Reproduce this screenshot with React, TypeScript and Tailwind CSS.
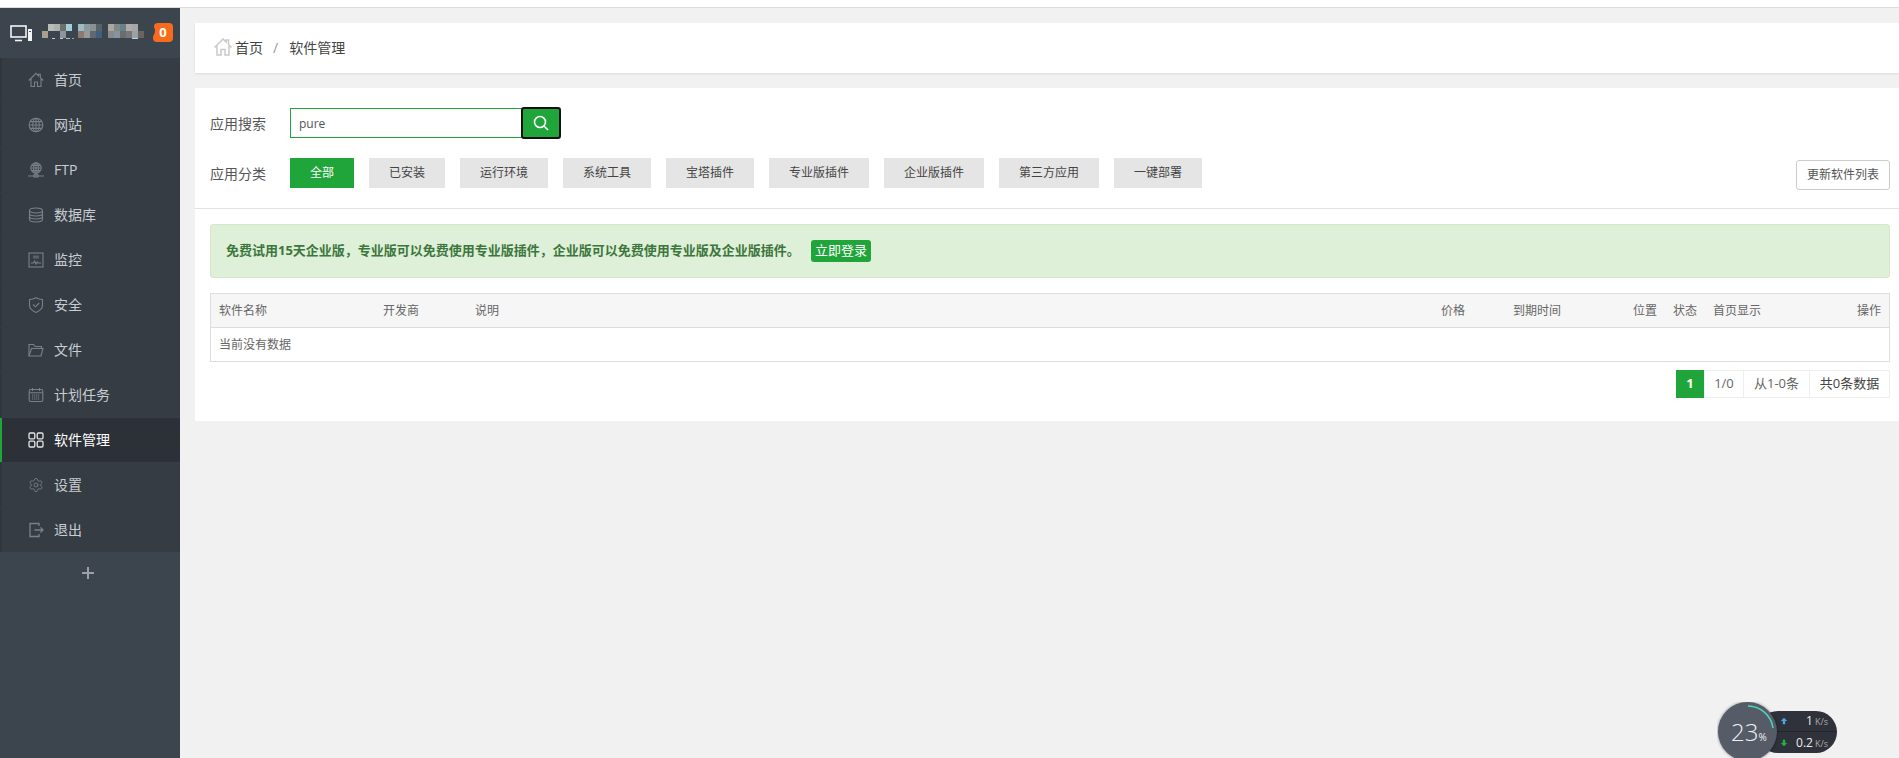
import React from "react";
import { Settings } from "lucide-react";

const FONT = '"Open Sans", "Liberation Sans", "Noto Sans CJK SC", sans-serif';

const S = { fill: "none", stroke: "#7b8088", strokeWidth: 1.1 };

const icons: Record<string, React.ReactNode> = {
  home: <path {...S} d="M.8 8.500 8 1.300l2.500 2.500V2.300h1.800v3.300l2.900 2.900M3 7v7.500h3.500V10h3v4.500H13V7" />,
  site: <g {...S}><circle cx="8" cy="8" r="6.800" /><ellipse cx="8" cy="8" rx="3.200" ry="6.800" /><path d="M1.200 8h13.600M2 4.600h12M2 11.400h12M8 1.200v13.600" /></g>,
  ftp: <g {...S}><circle cx="8" cy="6" r="5.200" /><ellipse cx="8" cy="6" rx="2.400" ry="5.200" /><path d="M2.800 6h10.400M3.600 3.400h8.800M3.600 8.600h8.800M8 .8v10.400M8 11.200v1.800M0 14h16" /><rect x="6" y="12.800" width="4" height="2.200" /></g>,
  db: <g {...S}><ellipse cx="8" cy="3.500" rx="6.500" ry="2.500" /><path d="M1.500 3.500v9c0 1.400 2.900 2.500 6.500 2.500s6.500-1.100 6.500-2.500v-9M1.500 6.500c0 1.400 2.900 2.500 6.500 2.500s6.500-1.100 6.500-2.500M1.500 9.500c0 1.400 2.900 2.500 6.500 2.500s6.500-1.100 6.500-2.500" /></g>,
  monitor: <g {...S}><rect x="1" y="1" width="14" height="14" /><path d="M3 11h2.500l1.200-2 1.300 3 1.300-2 .7 1H13" /><rect x="5" y="3.500" width="6" height="3" fill="#5c626a" stroke="none" /></g>,
  shield: <g {...S}><path d="M8 .8c2 1.200 4 1.700 6.500 1.700v6c0 3.200-2.800 5.300-6.500 6.900-3.700-1.600-6.500-3.700-6.500-6.900v-6C4 2.500 6 2 8 .8Z" /><path d="m5 7.500 2.300 2.300L11.200 6" /></g>,
  folder: <g {...S}><path d="M1 14V2.500h4.500L7 4.500h6.500V6.500" /><path d="M1 14 3.500 6.500H15L13 14Z" /></g>,
  calendar: <g {...S}><rect x="1.200" y="2.500" width="13.600" height="12" rx="1.500" /><path d="M1.200 5.800h13.600M4.500 1v3M11.500 1v3" /><path d="M4 8h8M4 10h8M4 12h8" strokeDasharray="1.200 .8" /></g>,
  soft: <g fill="none" stroke="#e4e6e8" strokeWidth="1.300"><rect x="1" y="1" width="5.800" height="5.800" rx="1.200" /><rect x="9.200" y="1" width="5.800" height="5.800" rx="1.200" /><rect x="1" y="9.200" width="5.800" height="5.800" rx="1.200" /><rect x="9.200" y="9.200" width="5.800" height="5.800" rx="1.200" /></g>,
  exit: <g {...S} strokeWidth="1.300"><path d="M11 4V1.500H2v13h9V12" /><path d="M6.500 8H15M12.500 5.500 15 8l-2.500 2.500" /></g>,
};

const menu: [string, string][] = [
  ["home", "首页"], ["site", "网站"], ["ftp", "FTP"], ["db", "数据库"], ["monitor", "监控"], ["shield", "安全"],
  ["folder", "文件"], ["calendar", "计划任务"], ["soft", "软件管理"], ["gear", "设置"], ["exit", "退出"],
];

const mosaic: [number, number, number, number, string][] = [
  [48, 16, 6, 7, "#b9bdb7"], [54, 16, 6, 7, "#aeb2ac"], [60, 16, 6, 7, "#6b6f6e"], [66, 16, 6, 7, "#a5cdd8"],
  [78, 16, 6, 7, "#9dbcc1"], [84, 16, 6, 7, "#8c9a9f"], [90, 16, 6, 7, "#8a8f93"], [96, 16, 6, 7, "#596168"],
  [108, 16, 6, 7, "#a9a79f"], [114, 16, 6, 7, "#7f8a85"], [120, 16, 6, 7, "#66808c"], [126, 16, 6, 7, "#b3a9a7"], [132, 16, 6, 7, "#a4a6a8"],
  [42, 23, 6, 7, "#a9a08b"], [60, 23, 6, 7, "#8e949d"], [78, 23, 6, 7, "#8c7a72"], [84, 23, 6, 7, "#96999a"], [90, 23, 6, 7, "#62686d"], [96, 23, 6, 7, "#3f5f7c"],
  [108, 23, 6, 7, "#868a8f"], [114, 23, 6, 7, "#8693a3"], [120, 23, 6, 7, "#6c6c6c"], [126, 23, 6, 7, "#77777d"], [132, 23, 6, 7, "#9ba1a8"], [138, 23, 6, 7, "#6a655c"],
  [52, 30, 3, 1, "#c8cccf"], [60, 30, 3, 1, "#c8cccf"], [66, 30, 4, 1, "#b6bcc0"], [72, 30, 2, 1, "#9aa0a5"], [132, 30, 6, 1, "#c8cccf"],
];

const tabs: [string, string][] = [
  ["全部", "w-[64px]"], ["已安装", "w-[76px]"], ["运行环境", "w-[88px]"], ["系统工具", "w-[88px]"], ["宝塔插件", "w-[88px]"],
  ["专业版插件", "w-[100px]"], ["企业版插件", "w-[100px]"], ["第三方应用", "w-[100px]"], ["一键部署", "w-[88px]"],
];

const cols: [string, string][] = [
  ["软件名称", "w-[164px]"], ["开发商", "w-[92px]"], ["说明", "w-[966px]"], ["价格", "w-[72px]"], ["到期时间", "w-[120px]"],
  ["位置", "w-[40px]"], ["状态", "w-[40px]"], ["首页显示", "w-[60px]"],
];

export default function App() {
  return (
    <div className="flex h-[758px] w-full flex-col overflow-hidden bg-[#f1f1f1] text-[12px] text-[#555]" style={{ fontFamily: FONT }}>
      <div className="h-[8px] shrink-0 border-b border-[#dcdcdc] bg-white" />
      <div className="relative flex min-h-0 flex-1">
        <aside className="flex w-[180px] shrink-0 flex-col bg-[#3c444d]">
          <div className="relative flex h-[50px] items-center">
            <svg width="180" height="50" viewBox="0 0 180 50">
              <g fill="none" stroke="#f3f4f5" strokeWidth="1.600">
                <rect x="11" y="18" width="15" height="11" />
                <path d="M15 32.500h7" />
              </g>
              <rect x="28" y="21" width="4" height="12" fill="#f3f4f5" />
              <rect x="29" y="23" width="2" height="1" fill="#555" />
              {mosaic.map(([x, y, w, h, c], i) => <rect key={i} x={x} y={y} width={w} height={h} fill={c} />)}
              <path d="M158 15h11a4 4 0 0 1 4 4v11a4 4 0 0 1-4 4h-12a4 4 0 0 1-4-4v-1c0-2 2-3 2-6s-1-3-1-5c0-2 2-3 4-3Z" fill="#f96b1c" />
            </svg>
            <span className="absolute left-[158px] top-[15px] flex h-[19px] w-[10px] items-center justify-center text-[13px] font-bold text-white">0</span>
          </div>
          <nav className="h-[494px] overflow-hidden bg-[#363c44]">
            {menu.map(([ic, label]) => {
              const active = ic === "soft";
              return (
                <div key={ic} className="h-[45px]">
                  <div className={`flex h-[44px] items-center border-l-2 pb-[1px] pl-[26px] text-[14px] ${active ? "border-[#20a53a] bg-[#2c3138] text-white" : "border-[#31363d] text-[#c8cdd2]"}`}>
                    {ic === "gear"
                      ? <Settings size={16} strokeWidth={1.300} color="#7b8088" className="mr-[10px] shrink-0" />
                      : <svg width="16" height="16" viewBox="0 0 16 16" className="mr-[10px] shrink-0">{icons[ic]}</svg>}
                    <span>{label}</span>
                  </div>
                </div>
              );
            })}
          </nav>
          <div className="flex h-[42px] items-center justify-center pr-[5px]">
            <svg width="14" height="14" viewBox="0 0 14 14"><path d="M7 1v12M1 7h12" stroke="#9ba1a7" strokeWidth="2" /></svg>
          </div>
        </aside>

        <main className="min-w-0 flex-1 pl-[15px] pt-[15px]">
          <div className="flex h-[50px] items-center bg-white pb-[2px] pl-[18px] text-[14px] shadow-[0_1px_2px_rgba(0,0,0,0.1)]">
            <svg width="20" height="20" viewBox="0 0 20 20" className="mr-[2px]"><path d="M1.500 10.500 10 2l3 3V3h2.500v4.500L18.500 10.500M4 9v9h4v-5.500h4V18h4V9" fill="none" stroke="#c9c9c9" strokeWidth="1.500" /></svg>
            <span className="text-[#444]">首页</span>
            <span className="ml-[10px] mr-[11px] text-[#999]">/</span>
            <span className="text-[#444]">软件管理</span>
          </div>

          <div className="mt-[15px] bg-white">
            <div className="relative h-[121px] border-b border-[#e3e3e3] pl-[15px] pt-[19px]">
              <div className="flex items-center">
                <span className="w-[80px] text-[14px] text-[#555]">应用搜索</span>
                <div className="flex h-[30px] w-[232px] items-center border border-[#20a53a] pl-[8px] pt-[1px] text-[12px] text-[#555]">pure</div>
                <div className="-ml-[1px] flex h-[32px] w-[40px] items-center justify-center rounded-[3px] border-2 border-[#111] bg-[#20a53a]">
                  <svg width="18" height="18" viewBox="0 0 18 18" fill="none" stroke="#fff" strokeWidth="1.600"><circle cx="8" cy="8" r="5.500" /><path d="m12 12 4 4" /></svg>
                </div>
              </div>
              <div className="mt-[19px] flex items-center">
                <span className="w-[80px] text-[14px] text-[#555]">应用分类</span>
                <div className="flex gap-[15px]">
                  {tabs.map(([t, w], i) => (
                    <div key={t} className={`flex h-[30px] items-center justify-center ${w} ${i === 0 ? "bg-[#20a53a] text-white" : "bg-[#e5e5e5] text-[#444]"}`}>{t}</div>
                  ))}
                </div>
              </div>
              <div className="absolute right-[9px] top-[72px] flex h-[30px] w-[94px] items-center justify-center rounded-[3px] border border-[#ccc] bg-white text-[#555]">更新软件列表</div>
            </div>

            <div className="pb-[23px] pl-[15px] pr-[9px] pt-[15px]">
              <div className="flex h-[54px] items-center rounded-[3px] border border-[#d6e9c6] bg-[#dff0d8] pl-[15px] text-[13px] font-bold text-[#3c763d]">
                <span>免费试用15天企业版，专业版可以免费使用专业版插件，企业版可以免费使用专业版及企业版插件。</span>
                <span className="ml-[11px] flex h-[22px] items-center rounded-[3px] bg-[#20a53a] px-[4px] font-normal text-white">立即登录</span>
              </div>

              <div className="mt-[15px] border border-[#ddd]">
                <div className="flex h-[34px] items-center border-b border-[#ddd] bg-[#f6f6f6] pl-[8px] text-[#666]">
                  {cols.map(([c, w]) => <span key={c} className={`shrink-0 ${w}`}>{c}</span>)}
                  <span className="ml-auto pr-[8px]">操作</span>
                </div>
                <div className="flex h-[33px] items-center pl-[8px] text-[#666]">当前没有数据</div>
              </div>

              <div className="mt-[8px] flex justify-end text-[13px]">
                <span className="flex h-[28px] w-[28px] items-center justify-center bg-[#20a53a] font-bold text-white">1</span>
                <span className="flex h-[28px] w-[40px] items-center justify-center border border-[#eee] text-[#666]">1/0</span>
                <span className="-ml-px flex h-[28px] w-[67px] items-center justify-center border border-[#eee] text-[#666]">从1-0条</span>
                <span className="-ml-px flex h-[28px] w-[81px] items-center justify-center border border-[#eee] text-[#444]">共0条数据</span>
              </div>
            </div>
          </div>
        </main>

        <div className="absolute bottom-0 right-[62px] h-[56px] w-[120px] overflow-hidden">
          <div className="absolute left-[40px] top-[9px] h-[42px] w-[80px] rounded-full bg-[#2f323a] text-[#eee]">
            <div className="absolute left-[25px] top-[2px] flex w-[46px] items-baseline justify-end text-[12px] leading-[16px]">1<span className="ml-[2px] text-[9px] text-[#aaa]">K/s</span></div>
            <div className="absolute left-[25px] top-[24px] flex w-[46px] items-baseline justify-end text-[12px] leading-[16px]">0.2<span className="ml-[2px] text-[9px] text-[#aaa]">K/s</span></div>
            <div className="absolute left-0 top-[20px] h-px w-full bg-[#24262c]" />
            <svg width="8" height="8" viewBox="0 0 10 10" className="absolute left-[23px] top-[6px]"><path d="M5 1 9 5H6.500v4h-3V5H1Z" fill="#4aa8e8" /></svg>
            <svg width="8" height="8" viewBox="0 0 10 10" className="absolute left-[23px] top-[28px]"><path d="M5 9 1 5h2.500V1h3v4H9Z" fill="#22b53c" /></svg>
          </div>
          <div className="absolute left-[1px] top-0 h-[59px] w-[59px] rounded-full bg-[#565b68] shadow-[0_0_3px_rgba(0,0,0,0.5)]">
            <svg width="59" height="59" viewBox="0 0 59 59" className="absolute left-0 top-0"><path d="M30 4A25.500 25.500 0 0 1 55 26" fill="none" stroke="#4dd6b8" strokeWidth="1.500" /></svg>
            <div className="absolute left-[13px] top-[16px] flex items-baseline text-[24px] font-light leading-[28px] text-[#f0f0f0]">23<span className="text-[10px] font-normal">%</span></div>
          </div>
        </div>
      </div>
    </div>
  );
}
